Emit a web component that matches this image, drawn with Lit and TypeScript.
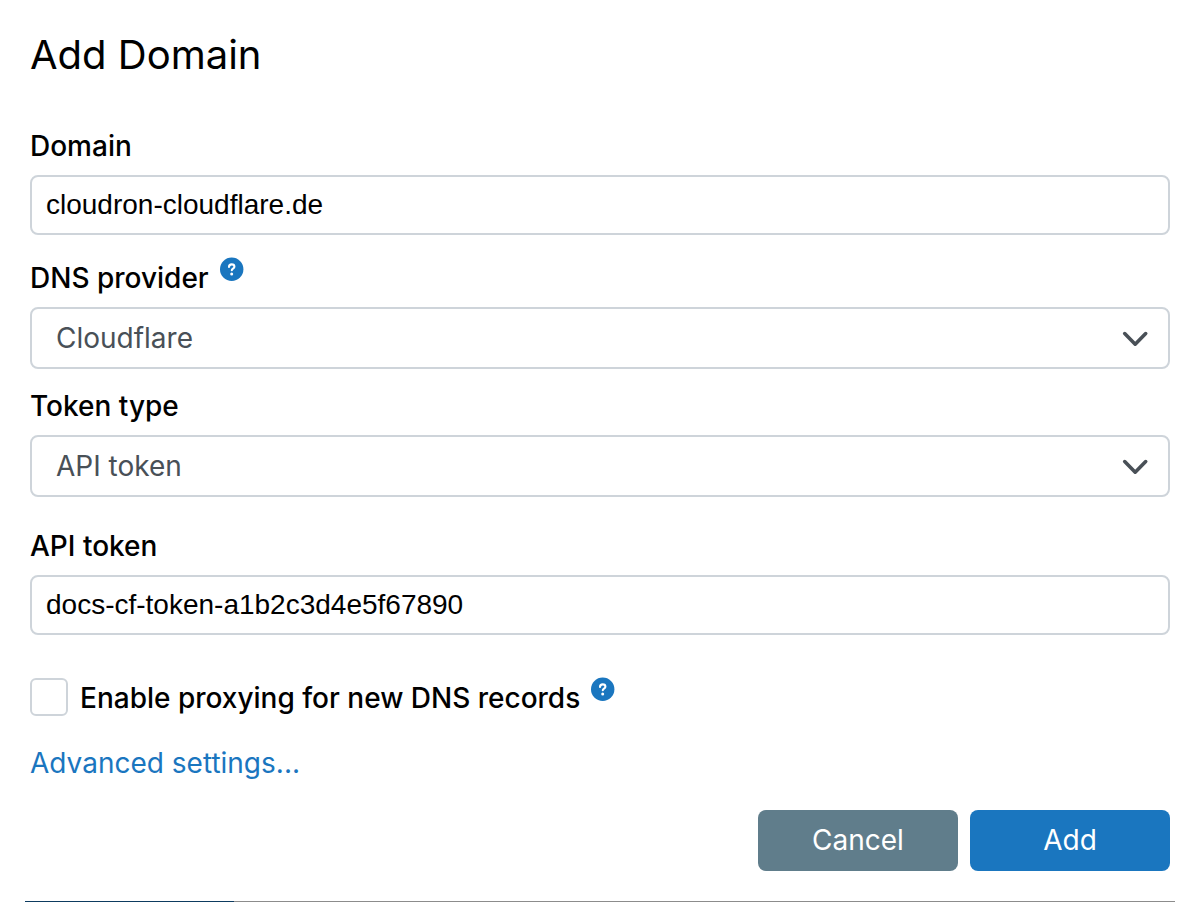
import { LitElement, html, css } from "lit";
import { customElement } from "lit/decorators.js";

@customElement("help-link")
class HelpLink extends LitElement {
  static styles = css`
    :host {
      display: block;
      width: 24px;
      height: 24px;
    }
    .link,
    .icon {
      display: block;
      width: 24px;
      height: 24px;
    }
  `;

  render() {
    return html`<a class="link" href="#help" aria-label="Help">
      <svg class="icon" viewBox="0 0 24 24" aria-hidden="true">
        <circle cx="11.7" cy="12.2" r="11.7" fill="#1a76bf" />
        <path
          d="M9 10C9 8.2 10 7.4 11.7 7.4c1.6 0 2.7.9 2.7 2.3 0 2-2.6 2-2.6 3.6"
          fill="none"
          stroke="#fff"
          stroke-width="2.1"
          stroke-linecap="round"
          stroke-linejoin="round"
        />
        <circle cx="11.7" cy="16.9" r="1.5" fill="#fff" />
      </svg>
    </a>`;
  }
}

@customElement("app-root")
class AppRoot extends LitElement {
  static styles = css`
    :host {
      display: block;
      background: #fff;
      color: #000;
      font-family: Inter, "Noto Sans", sans-serif;
      font-size: 28px;
      line-height: 34px;
    }
    * {
      box-sizing: border-box;
    }
    .dialog {
      padding: 30px 30px 0;
    }
    .title {
      margin: 0 0 49px;
      font-size: 40px;
      line-height: 50px;
      font-weight: 400;
    }
    .field {
      display: flex;
      flex-direction: column;
      gap: 12px;
    }
    .after-input {
      margin-top: 22px;
    }
    .after-select {
      margin-top: 20px;
    }
    .section {
      margin-top: 32px;
    }
    .label {
      font-weight: 500;
    }
    .heading {
      display: flex;
      align-items: flex-end;
      gap: 11px;
      height: 38px;
    }
    .help {
      align-self: flex-start;
    }
    .input,
    .select {
      width: 100%;
      margin: 0;
      border: 2px solid #ced4da;
      border-radius: 8px;
      background: #fff;
      outline: none;
    }
    .input {
      height: 60px;
      padding: 0 14px;
      color: #000;
      font-family: "Liberation Sans", Arial, sans-serif;
      font-size: 28px;
    }
    .select-box {
      display: grid;
      align-items: center;
    }
    .select-box > * {
      grid-area: 1 / 1;
    }
    .select {
      appearance: none;
      height: 62px;
      padding: 0 60px 0 24px;
      color: #495057;
      font: inherit;
    }
    .chevron {
      justify-self: end;
      width: 28px;
      height: 28px;
      margin-right: 21px;
      pointer-events: none;
    }
    .check-row {
      display: flex;
      align-items: flex-end;
      gap: 12px;
      margin-top: 42px;
    }
    .check-row .heading {
      height: 39px;
      line-height: 36px;
    }
    .checkbox {
      appearance: none;
      width: 38px;
      height: 38px;
      margin: 0;
      border: 2px solid #ced4da;
      border-radius: 6px;
      background: #fff;
    }
    .advanced {
      display: block;
      width: fit-content;
      margin-top: 30px;
      color: #1a76bf;
      text-decoration: none;
    }
    .actions {
      display: flex;
      justify-content: flex-end;
      gap: 12px;
      margin: 30px 0;
    }
    .button {
      width: 200px;
      height: 61px;
      padding: 0 0 2px;
      border: 0;
      border-radius: 8px;
      color: #fff;
      font: inherit;
      background: #607d8b;
    }
    .primary {
      background: #1a76bf;
    }
    .track {
      height: 1px;
      margin: 0 -5px;
      background: #8c8c8c;
    }
    .progress {
      width: 209px;
      height: 1px;
      background: #0d3b60;
    }
  `;

  private chevron() {
    return html`<svg class="chevron" viewBox="0 0 28 28" aria-hidden="true">
      <path
        d="M3.7 9.6 14.2 20.2 24.7 9.6"
        fill="none"
        stroke="#495057"
        stroke-width="3.6"
        stroke-linecap="round"
        stroke-linejoin="round"
      />
    </svg>`;
  }

  render() {
    return html`
      <form class="dialog" @submit=${(e: Event) => e.preventDefault()}>
        <h1 class="title">Add Domain</h1>

        <div class="field">
          <label class="label" for="domain">Domain</label>
          <input class="input" id="domain" type="text" spellcheck="false" .value=${"cloudron-cloudflare.de"} />
        </div>

        <div class="field after-input">
          <div class="heading">
            <label class="label" for="provider">DNS provider</label>
            <help-link class="help"></help-link>
          </div>
          <div class="select-box">
            <select class="select" id="provider">
              <option>Cloudflare</option>
            </select>
            ${this.chevron()}
          </div>
        </div>

        <div class="field after-select">
          <label class="label" for="token-type">Token type</label>
          <div class="select-box">
            <select class="select" id="token-type">
              <option>API token</option>
            </select>
            ${this.chevron()}
          </div>
        </div>

        <div class="field section">
          <label class="label" for="token">API token</label>
          <input class="input" id="token" type="text" spellcheck="false" .value=${"docs-cf-token-a1b2c3d4e5f67890"} />
        </div>

        <div class="check-row">
          <input class="checkbox" id="proxying" type="checkbox" />
          <div class="heading">
            <label class="label" for="proxying">Enable proxying for new DNS records</label>
            <help-link class="help"></help-link>
          </div>
        </div>

        <a class="advanced" href="#advanced">Advanced settings...</a>

        <div class="actions">
          <button class="button" type="button">Cancel</button>
          <button class="button primary" type="submit">Add</button>
        </div>

        <div class="track"><div class="progress"></div></div>
      </form>
    `;
  }
}
